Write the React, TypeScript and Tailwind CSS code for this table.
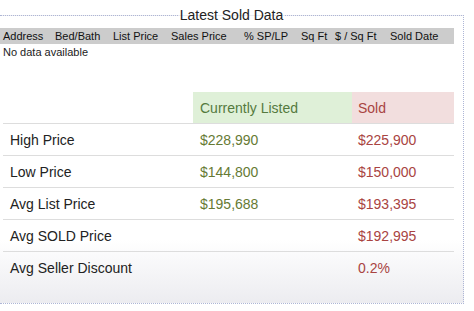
import React from "react";

const cols = [
  { label: "Address", w: "w-[52px]" },
  { label: "Bed/Bath", w: "w-[58px]" },
  { label: "List Price", w: "w-[58px]" },
  { label: "Sales Price", w: "w-[73px]" },
  { label: "% SP/LP", w: "w-[57px]" },
  { label: "Sq Ft", w: "w-[34px]" },
  { label: "$ / Sq Ft", w: "w-[55px]" },
  { label: "Sold Date", w: "flex-1" },
];

const rows = [
  { label: "High Price", listed: "$228,990", sold: "$225,900" },
  { label: "Low Price", listed: "$144,800", sold: "$150,000" },
  { label: "Avg List Price", listed: "$195,688", sold: "$193,395" },
  { label: "Avg SOLD Price", listed: "", sold: "$192,995" },
  { label: "Avg Seller Discount", listed: "", sold: "0.2%" },
];

export default function App() {
  return (
    <div className="w-[474px] h-[311px] bg-white font-['Liberation_Sans',Arial,sans-serif] text-[#222] overflow-hidden">
      <fieldset className="mt-[7px] w-[464px] border-t border-r border-b border-dotted border-[#aeb6d6] bg-gradient-to-b from-white from-[78%] to-[#ececf0]">
        <legend className="mx-auto px-[2px] text-[14px] leading-4 text-[#222]">Latest Sold Data</legend>

        <div className="pr-[9px] pb-[20px]">
          <div className="mt-[5px] flex h-[16px] items-center bg-[#cccccc] pl-[3px] text-[11px] leading-none text-[#111]">
            {cols.map((c) => (
              <div key={c.label} className={`${c.w} whitespace-nowrap`}>
                {c.label}
              </div>
            ))}
          </div>
          <div className="pl-[3px] pt-[2px] text-[11px] leading-[13px]">No data available</div>

          <div className="ml-[3px] mt-[33px] text-[14px] leading-5">
            <div className="grid grid-cols-[190px_159px_1fr] h-[31px]">
              <div />
              <div className="flex items-center bg-[#dff0d8] pl-[7px] text-[#557a3e]">Currently Listed</div>
              <div className="flex items-center bg-[#f2dede] pl-[6px] text-[#a94442]">Sold</div>
            </div>
            {rows.map((r) => (
              <div key={r.label} className="grid grid-cols-[190px_159px_1fr] h-[32px] border-t border-[#dddddd]">
                <div className="flex items-center pl-[7px] text-[#222]">{r.label}</div>
                <div className="flex items-center pl-[7px] text-[#667a34]">{r.listed}</div>
                <div className="flex items-center pl-[6px] text-[#a94442]">{r.sold}</div>
              </div>
            ))}
          </div>
        </div>
      </fieldset>
    </div>
  );
}
